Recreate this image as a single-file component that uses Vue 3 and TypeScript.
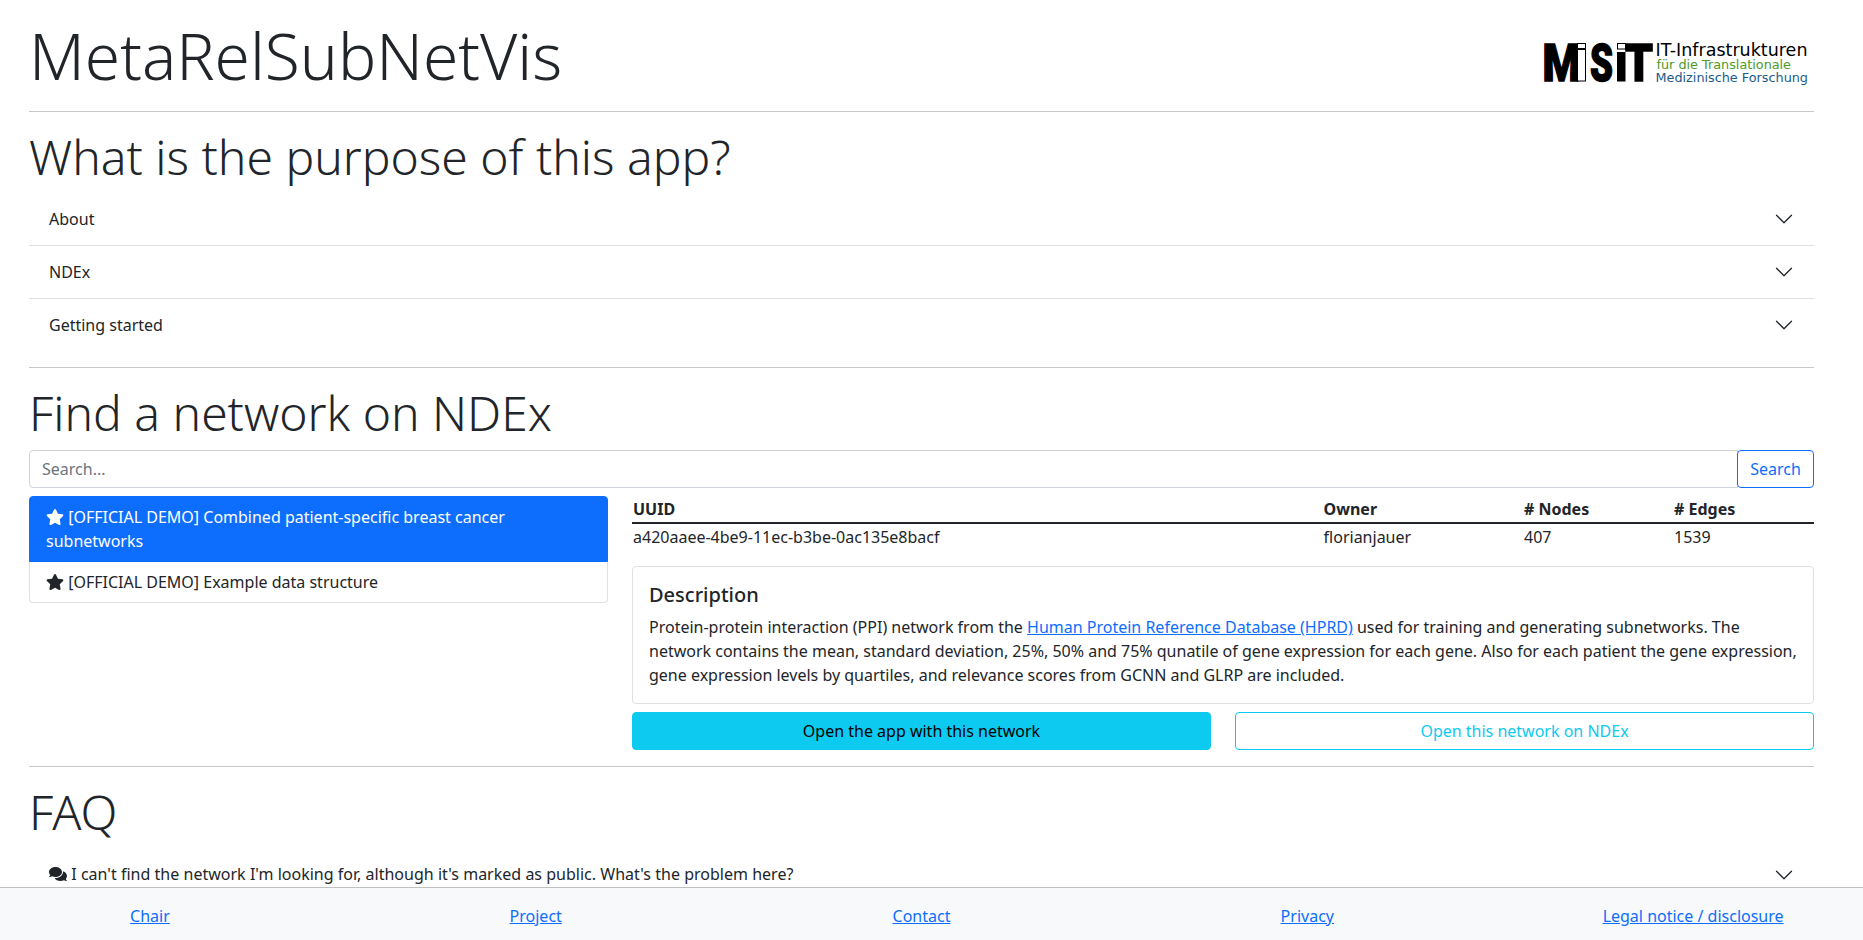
<script setup lang="ts">
interface NetworkEntry {
  name: string
  active: boolean
}

const topics: string[] = ['About', 'NDEx', 'Getting started']

const networks: NetworkEntry[] = [
  { name: '[OFFICIAL DEMO] Combined patient-specific breast cancer subnetworks', active: true },
  { name: '[OFFICIAL DEMO] Example data structure', active: false },
]

const columns: { label: string; value: string }[] = [
  { label: 'UUID', value: 'a420aaee-4be9-11ec-b3be-0ac135e8bacf' },
  { label: 'Owner', value: 'florianjauer' },
  { label: '# Nodes', value: '407' },
  { label: '# Edges', value: '1539' },
]

const footerLinks: string[] = ['Chair', 'Project', 'Contact', 'Privacy', 'Legal notice / disclosure']
</script>

<template>
  <div class="page">
    <main class="content">
      <header class="header">
        <h1>MetaRelSubNetVis</h1>
        <svg class="logo" width="266" height="44" viewBox="0 0 266 44" role="img" aria-label="MiSiT">
          <g class="mark">
            <text x="-1.5" y="38.9" textLength="38" lengthAdjust="spacingAndGlyphs">M</text>
            <text x="46" y="38.9" textLength="23" lengthAdjust="spacingAndGlyphs">S</text>
            <text x="81" y="38.9" textLength="28" lengthAdjust="spacingAndGlyphs">T</text>
          </g>
          <rect class="outline" x="33.5" y="1.5" width="8" height="5" />
          <rect class="outline" x="33.5" y="7.5" width="8" height="31.5" />
          <rect class="outline" x="73.5" y="1.5" width="8" height="5.5" />
          <rect x="73" y="10" width="8.5" height="29.5" />
          <text class="line-one" x="111.5" y="14" textLength="152" lengthAdjust="spacingAndGlyphs">IT-Infrastrukturen</text>
          <text class="line-two" x="112.5" y="26.8" textLength="134.5" lengthAdjust="spacingAndGlyphs">für die Translationale</text>
          <text class="line-three" x="111.5" y="39.5" textLength="152.5" lengthAdjust="spacingAndGlyphs">Medizinische Forschung</text>
        </svg>
      </header>

      <hr />
      <h2>What is the purpose of this app?</h2>
      <div class="accordion">
        <button v-for="topic in topics" :key="topic" type="button" class="accordion-row">
          <span>{{ topic }}</span>
          <svg class="chevron" viewBox="0 0 16 16" width="20" height="20" fill="#212529">
            <path fill-rule="evenodd" d="M1.646 4.646a.5.5 0 0 1 .708 0L8 10.293l5.646-5.647a.5.5 0 0 1 .708.708l-6 6a.5.5 0 0 1-.708 0l-6-6a.5.5 0 0 1 0-.708z" />
          </svg>
        </button>
      </div>

      <hr />
      <h2>Find a network on NDEx</h2>
      <form class="search" @submit.prevent>
        <input type="text" placeholder="Search..." />
        <button type="submit">Search</button>
      </form>

      <div class="results">
        <ul class="network-list">
          <li v-for="network in networks" :key="network.name" :class="{ active: network.active }">
            <svg class="star" viewBox="0 0 576 512" width="18" height="16" fill="currentColor">
              <path d="M259.300 17.800L194 150.200 47.900 171.500c-26.200 3.800-36.700 36.100-17.700 54.600l105.700 103-25 145.500c-4.500 26.300 23.200 46 46.400 33.700L288 439.600l130.700 68.700c23.200 12.200 50.900-7.400 46.400-33.700l-25-145.500 105.700-103c19-18.500 8.500-50.800-17.700-54.600L382 150.200 316.700 17.800c-11.700-23.600-45.600-23.900-57.400 0z" />
            </svg>
            {{ network.name }}
          </li>
        </ul>

        <section class="details">
          <div class="table">
            <div v-for="column in columns" :key="column.label" class="table-column">
              <div class="table-head">{{ column.label }}</div>
              <div class="table-cell">{{ column.value }}</div>
            </div>
          </div>
          <div class="card">
            <h5>Description</h5>
            <p>
              Protein-protein interaction (PPI) network from the
              <a href="#">Human Protein Reference Database (HPRD)</a>
              used for training and generating subnetworks. The network contains the mean, standard deviation,
              25%, 50% and 75% qunatile of gene expression for each gene. Also for each patient the gene
              expression, gene expression levels by quartiles, and relevance scores from GCNN and GLRP are
              included.
            </p>
          </div>
          <div class="actions">
            <button type="button" class="primary">Open the app with this network</button>
            <button type="button" class="secondary">Open this network on NDEx</button>
          </div>
        </section>
      </div>

      <hr />
      <h2>FAQ</h2>
      <div class="accordion faq">
        <button type="button" class="accordion-row">
          <span>
            <svg class="comments" viewBox="0 0 576 512" width="18" height="16" fill="currentColor">
              <path d="M416 192c0-88.400-93.100-160-208-160S0 103.600 0 192c0 34.300 14.100 65.900 38 92-13.400 30.200-35.500 54.200-35.800 54.500-2.200 2.300-2.800 5.700-1.500 8.700S4.800 352 8 352c36.600 0 66.900-12.300 88.700-25 32.200 15.700 70.300 25 111.300 25 114.900 0 208-71.600 208-160zm122 220c23.900-26 38-57.700 38-92 0-66.900-53.500-124.200-129.300-148.100.9 6.600 1.300 13.300 1.300 20.100 0 105.900-107.700 192-240 192-10.800 0-21.300-.8-31.700-1.900C207.800 439.600 281.800 480 368 480c41 0 79.100-9.200 111.300-25 21.800 12.700 52.100 25 88.700 25 3.200 0 6.100-1.900 7.300-4.800 1.300-2.900.7-6.300-1.500-8.700-.3-.3-22.400-24.200-35.800-54.500z" />
            </svg>
            I can't find the network I'm looking for, although it's marked as public. What's the problem here?
          </span>
          <svg class="chevron" viewBox="0 0 16 16" width="20" height="20" fill="#212529">
            <path fill-rule="evenodd" d="M1.646 4.646a.5.5 0 0 1 .708 0L8 10.293l5.646-5.647a.5.5 0 0 1 .708.708l-6 6a.5.5 0 0 1-.708 0l-6-6a.5.5 0 0 1 0-.708z" />
          </svg>
        </button>
      </div>
    </main>

    <footer class="footer">
      <div v-for="link in footerLinks" :key="link"><a href="#">{{ link }}</a></div>
    </footer>
  </div>
</template>

<style>
html,
body {
  margin: 0;
  overflow: hidden;
  background: #fff;
}
</style>

<style scoped>
.page {
  display: flex;
  flex-direction: column;
  height: 100vh;
  overflow: hidden;
  color: #212529;
  font: 400 16px/1.5 'Noto Sans', 'Liberation Sans', sans-serif;
}
.page *,
.page *::before {
  box-sizing: border-box;
}
.content {
  flex: 1;
  min-height: 0;
  overflow: hidden;
  width: 1785px;
  margin-left: 29px;
  padding-top: 18px;
}
button,
input {
  margin: 0;
  font: inherit;
  color: inherit;
}
.header {
  display: flex;
  justify-content: space-between;
  height: 77px;
}
.logo {
  overflow: visible;
  margin: 24px 4px 0 0;
}
.mark text {
  font: 900 52px Roboto, sans-serif;
  stroke: #000;
  stroke-width: 1.5px;
}
.outline {
  fill: #fff;
  stroke: #000;
}
.line-one,
.line-two,
.line-three {
  font-family: 'DejaVu Sans', sans-serif;
}
.line-one {
  font-size: 17px;
}
.line-two {
  font-size: 13px;
  fill: #4b9b27;
}
.line-three {
  font-size: 13px;
  fill: #1c5a8c;
}
hr {
  height: 1px;
  margin: 16px 0;
  border: 0;
  background: #c7c8c9;
}
h1,
h2 {
  margin: 0;
  font-weight: 300;
  line-height: 1.2;
}
h1 {
  font-size: 64px;
}
h2 {
  height: 58px;
  margin-bottom: 8px;
  font-size: 48px;
}
h2 + .accordion {
  margin-top: -1px;
}
h2 + .accordion.faq {
  margin-top: 0;
}
.faq .accordion-row span {
  margin-top: -2px;
  word-spacing: 0.1px;
}
.accordion-row {
  display: flex;
  align-items: center;
  justify-content: space-between;
  width: 100%;
  height: 53px;
  padding: 0 20px;
  border: 0;
  border-bottom: 1px solid #dfdfdf;
  background: #fff;
  text-align: left;
}
.accordion-row:last-child {
  height: 52px;
  border-bottom: 0;
}
.chevron {
  flex: none;
}
.search {
  display: flex;
  height: 38px;
}
.search input {
  flex: 1;
  padding: 6px 12px;
  border: 1px solid #ced4da;
  border-radius: 4px 0 0 4px;
  background: #fff;
}
.search input::placeholder {
  color: #6c757d;
  opacity: 1;
}
.search button {
  width: 77px;
  margin-left: -1px;
  padding: 0;
  border: 1px solid #0d6efd;
  border-radius: 4px;
  background: #fff;
  color: #0d6efd;
}
.results {
  display: grid;
  grid-template-columns: 579px 1182px;
  gap: 24px;
  align-items: start;
  margin-top: 8px;
}
.network-list {
  margin: 0;
  padding: 0;
  list-style: none;
}
.network-list li {
  padding: 8px 16px;
  border: 1px solid #dfdfdf;
  border-top: 0;
}
.network-list li.active {
  border: 1px solid #0d6efd;
  background: #0d6efd;
  color: #fff;
}
.network-list li:first-child {
  border-radius: 4px 4px 0 0;
}
.network-list li:last-child {
  border-radius: 0 0 4px 4px;
}
.star,
.comments {
  vertical-align: -2px;
}
.table {
  display: grid;
  grid-template-columns: 690.6px 200.4px 150px 141px;
  margin-bottom: 16px;
}
.table-head,
.table-cell {
  padding: 1px;
}
.table-head {
  border-bottom: 2px solid #212529;
  font-weight: 700;
}
.card {
  padding: 16px;
  border: 1px solid #dfdfdf;
  border-radius: 4px;
}
h5 {
  margin: 0 0 8px;
  font-size: 20px;
  font-weight: 500;
  line-height: 1.2;
}
p {
  margin: 0;
}
a {
  color: #0d6efd;
  text-decoration: underline;
}
.actions {
  display: grid;
  grid-template-columns: 1fr 1fr;
  gap: 24px;
  margin-top: 8px;
}
.actions button {
  height: 38px;
  padding: 0;
  border: 1px solid #0dcaf0;
  border-radius: 4px;
}
.primary {
  background: #0dcaf0;
  color: #000;
}
.secondary {
  background: #fff;
  color: #0dcaf0;
}
.footer {
  display: grid;
  grid-template-columns: repeat(5, 385.8px);
  justify-content: center;
  flex: none;
  height: 53px;
  padding: 16px 20px 0 0;
  border-top: 1px solid #bfc0c1;
  background: #f8f9fa;
  text-align: center;
}
</style>
